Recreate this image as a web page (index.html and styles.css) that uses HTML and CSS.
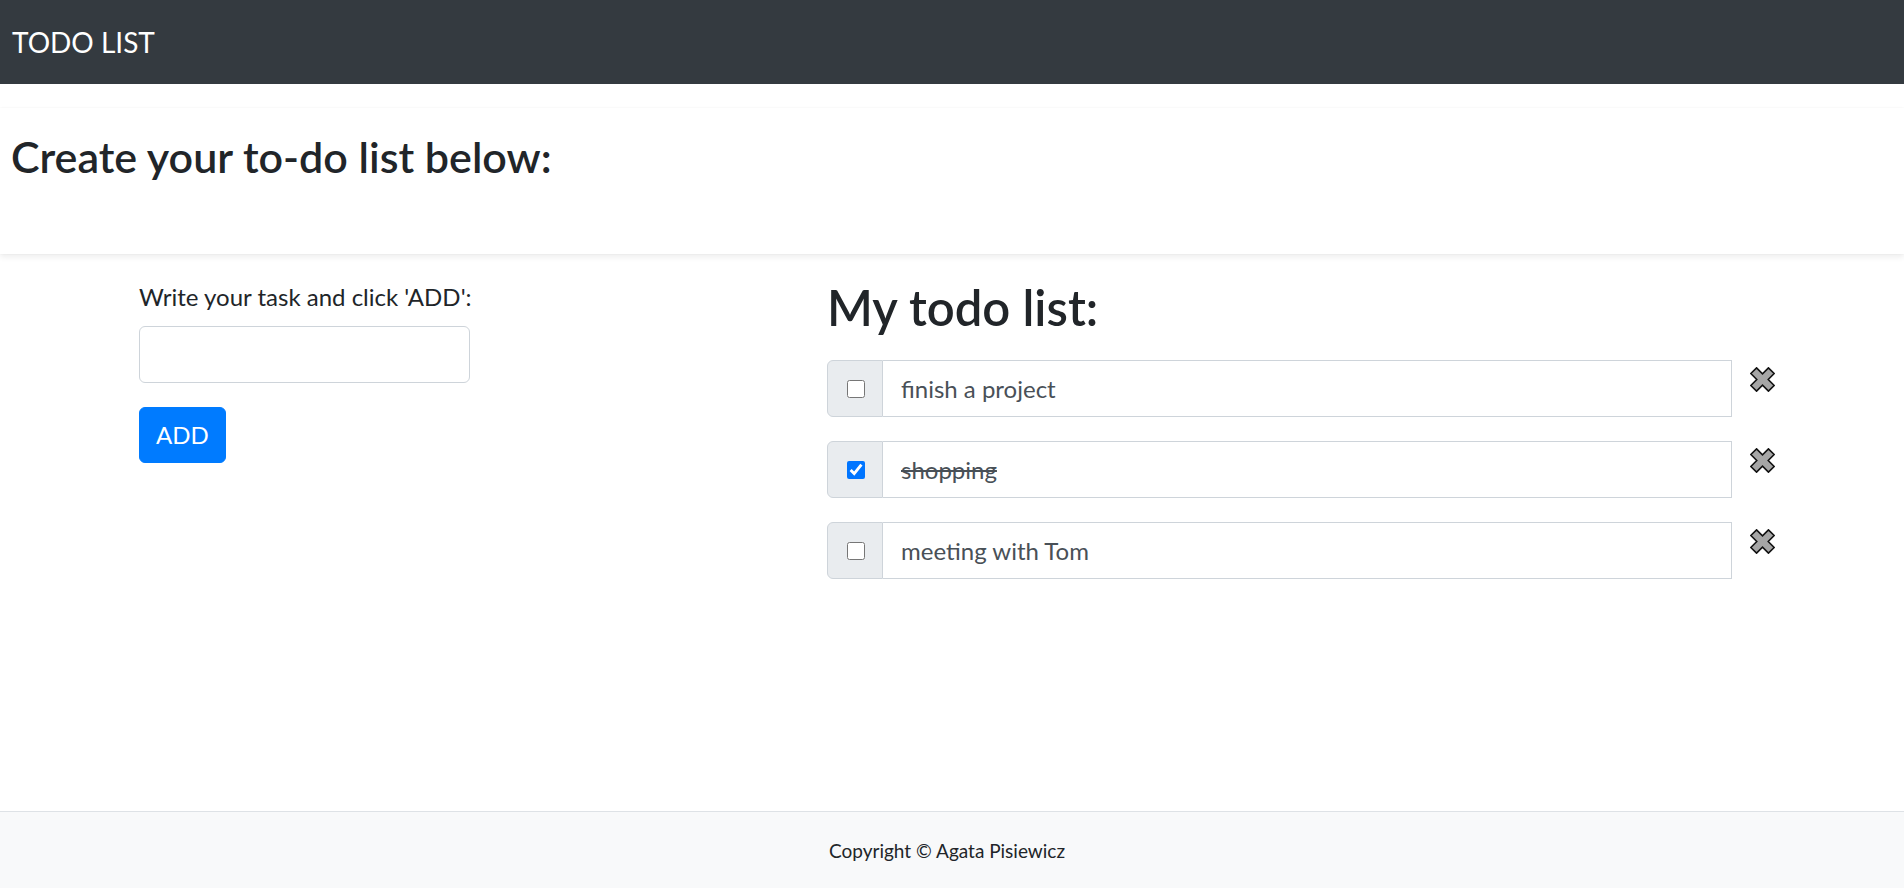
FILE: index.html
```html
<!DOCTYPE html>
<html lang="en">
<head>
<meta charset="utf-8">
<title>TODO LIST</title>
<link rel="stylesheet" href="styles.css">
</head>
<body>
<nav class="navbar"><span class="brand">TODO LIST</span></nav>
<header class="hero"><h2 class="hero-title">Create your to-do list below:</h2></header>
<main class="content">
  <section class="add-col">
    <label class="add-label">Write your task and click 'ADD':</label>
    <div class="add-field"></div>
    <button class="add-btn" type="button">ADD</button>
  </section>
  <section class="list-col">
    <h1 class="list-title">My todo list:</h1>
    <ul class="todos">
      <li class="todo">
        <div class="todo-group">
          <span class="todo-check"><input type="checkbox"></span>
          <span class="todo-text">finish a project</span>
        </div>
        <span class="todo-remove"><svg viewBox="0 0 24 24" width="25" height="25"><polygon points="0.8,6.3 6.3,0.8 12,6.5 17.7,0.8 23.2,6.3 17.5,12 23.2,17.7 17.7,23.2 12,17.5 6.3,23.2 0.8,17.7 6.5,12" fill="#a6a6a6" stroke="#111" stroke-width="1.5" stroke-linejoin="miter"/></svg></span>
      </li>
      <li class="todo">
        <div class="todo-group">
          <span class="todo-check"><input type="checkbox" checked></span>
          <span class="todo-text done">shopping</span>
        </div>
        <span class="todo-remove"><svg viewBox="0 0 24 24" width="25" height="25"><polygon points="0.8,6.3 6.3,0.8 12,6.5 17.7,0.8 23.2,6.3 17.5,12 23.2,17.7 17.7,23.2 12,17.5 6.3,23.2 0.8,17.7 6.5,12" fill="#a6a6a6" stroke="#111" stroke-width="1.5" stroke-linejoin="miter"/></svg></span>
      </li>
      <li class="todo">
        <div class="todo-group">
          <span class="todo-check"><input type="checkbox"></span>
          <span class="todo-text">meeting with Tom</span>
        </div>
        <span class="todo-remove"><svg viewBox="0 0 24 24" width="25" height="25"><polygon points="0.8,6.3 6.3,0.8 12,6.5 17.7,0.8 23.2,6.3 17.5,12 23.2,17.7 17.7,23.2 12,17.5 6.3,23.2 0.8,17.7 6.5,12" fill="#a6a6a6" stroke="#111" stroke-width="1.5" stroke-linejoin="miter"/></svg></span>
      </li>
    </ul>
  </section>
</main>
<footer class="footer">Copyright © Agata Pisiewicz</footer>
</body>
</html>
```

FILE: styles.css
```css
* { box-sizing: border-box; }
html, body { margin: 0; padding: 0; height: 100%; }
body {
  font-family: "Segoe UI", Lato, "Noto Sans", sans-serif;
  color: #212529;
  background: #fff;
  font-size: 24px;
  line-height: 1.5;
  display: flex;
  flex-direction: column;
  min-height: 888px;
}
.navbar {
  height: 84px;
  background: #343a40;
  display: flex;
  align-items: center;
  padding: 0 12px;
  margin-bottom: 24px;
}
.brand {
  color: #fff;
  font-size: 28px;
  line-height: 45px;
}
.hero {
  height: 146px;
  padding: 23px 11px 0;
  box-shadow: 0 0 2px rgba(0,0,0,0.04), 0 3px 6px rgba(0,0,0,0.075);
  position: relative;
}
.hero-title {
  margin: 0;
  font-size: 43px;
  font-weight: 600;
  line-height: 1.2;
}
.content {
  flex: 1;
  display: flex;
  padding: 25px 0 0 139px;
}
.add-col {
  width: 688px;
  display: flex;
  flex-direction: column;
  align-items: flex-start;
}
.add-label {
  display: block;
  margin-bottom: 11px;
}
.add-field {
  width: 331px;
  height: 57px;
  border: 1px solid #ced4da;
  border-radius: 6px;
  background: #fff;
  margin-bottom: 24px;
}
.add-btn {
  font-family: inherit;
  font-size: 24px;
  line-height: 36px;
  color: #fff;
  background: #007bff;
  border: 1px solid #007bff;
  border-radius: 6px;
  padding: 9px 0;
  width: 87px;
  height: 56px;
}
.list-col {
  width: 960px;
}
.list-title {
  margin: 0 0 24px;
  font-size: 49px;
  font-weight: 600;
  line-height: 57px;
}
.todos {
  list-style: none;
  margin: 0;
  padding: 0;
  display: flex;
  flex-direction: column;
  gap: 24px;
}
.todo {
  display: flex;
  align-items: flex-start;
}
.todo-group {
  width: 905px;
  height: 57px;
  display: flex;
}
.todo-check {
  width: 56px;
  background: #e9ecef;
  border: 1px solid #ced4da;
  border-radius: 6px 0 0 6px;
  display: flex;
  align-items: center;
  justify-content: center;
}
.todo-check input {
  width: 18px;
  height: 18px;
  margin: 0 0 0 2px;
}
.todo-text {
  flex: 1;
  border: 1px solid #ced4da;
  border-left: none;
  display: flex;
  align-items: center;
  padding: 0 18px;
  color: #495057;
  font-size: 24px;
}
.todo-text.done {
  text-decoration: line-through;
}
.todo-remove {
  margin: 7px 0 0 18px;
  width: 25px;
  height: 25px;
  display: block;
}
.todo-remove svg { display: block; }
.footer {
  height: 77px;
  background: #f8f9fa;
  border-top: 1px solid #dee2e6;
  text-align: center;
  font-size: 19px;
  line-height: 28px;
  padding: 25px 10px 0 0;
}
```
